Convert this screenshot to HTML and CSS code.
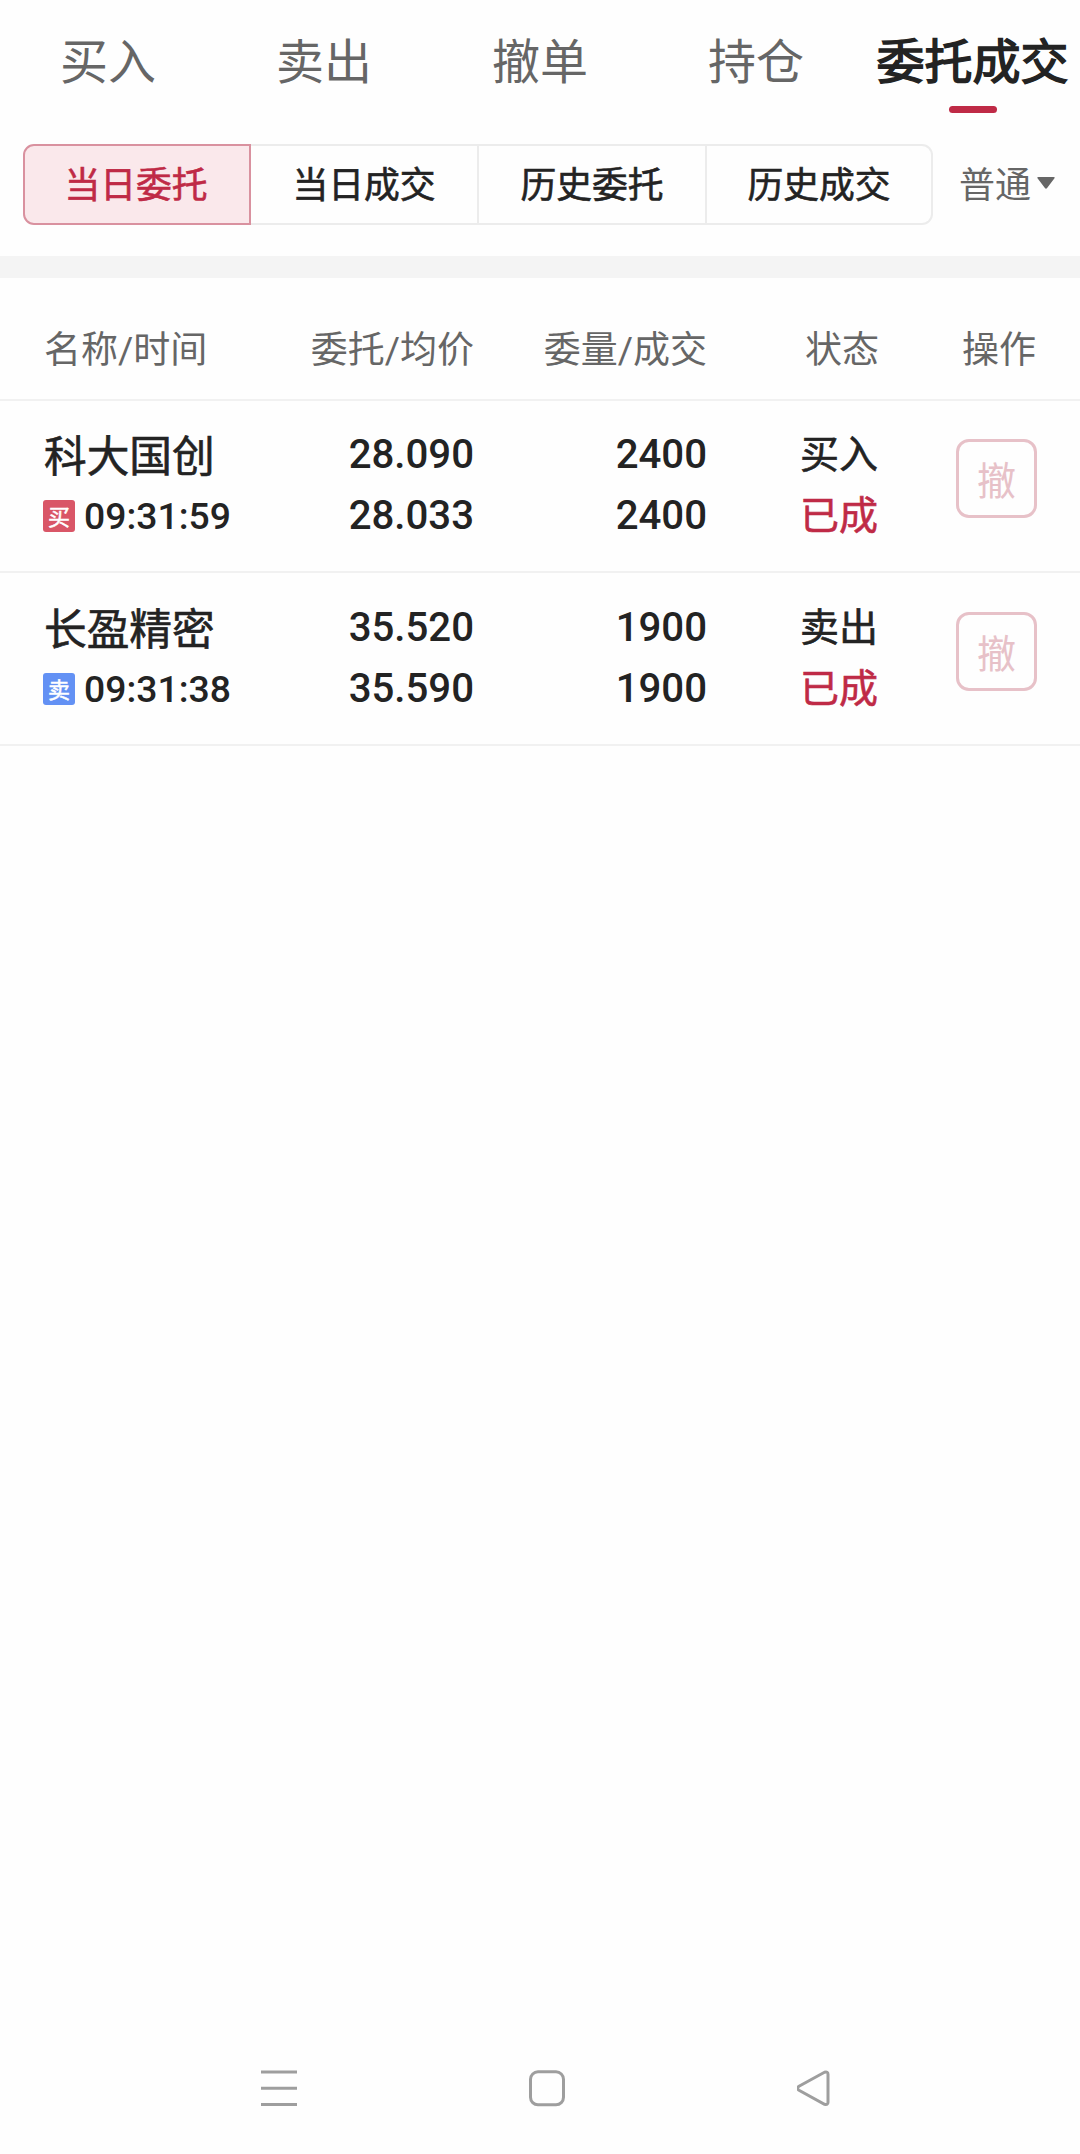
FILE: index.html
```html
<!DOCTYPE html>
<html lang="zh-CN">
<head>
<meta charset="utf-8">
<title>委托成交</title>
<link rel="stylesheet" href="styles.css">
</head>
<body>
<nav class="tabs">
  <a class="tab">买入</a>
  <a class="tab">卖出</a>
  <a class="tab">撤单</a>
  <a class="tab">持仓</a>
  <a class="tab active">委托成交</a>
</nav>
<section class="filters">
  <div class="segments">
    <span class="segment selected">当日委托</span>
    <span class="segment">当日成交</span>
    <span class="segment">历史委托</span>
    <span class="segment">历史成交</span>
  </div>
  <div class="type">普通<svg class="caret" width="18" height="12" viewBox="0 0 18 12"><path d="M1.500 0h15q2 0 .8 1.500l-7.200 9.500q-1.100 1.300-2.200 0L.7 1.500Q-.5 0 1.500 0z"/></svg></div>
</section>
<main class="orders">
  <div class="grid head">
    <span class="first">名称<i>/</i>时间</span><span>委托<i>/</i>均价</span><span>委量<i>/</i>成交</span><span>状态</span><span class="last">操作</span>
  </div>
  <div class="grid row">
    <div class="stock"><div class="name">科大国创</div><div class="time"><span class="badge buy">买</span>09:31:59</div></div>
    <div class="num"><div>28.090</div><div>28.033</div></div>
    <div class="num"><div>2400</div><div>2400</div></div>
    <div class="status"><div>买入</div><div class="done">已成</div></div>
    <button class="cancel">撤</button>
  </div>
  <div class="grid row">
    <div class="stock"><div class="name">长盈精密</div><div class="time"><span class="badge sell">卖</span>09:31:38</div></div>
    <div class="num"><div>35.520</div><div>35.590</div></div>
    <div class="num"><div>1900</div><div>1900</div></div>
    <div class="status"><div>卖出</div><div class="done">已成</div></div>
    <button class="cancel">撤</button>
  </div>
</main>
<footer class="sysbar">
  <svg width="36" height="37" viewBox="0 0 36 37"><path d="M0 2h36M0 18.300h36M0 34.500h36"/></svg>
  <svg width="36" height="37" viewBox="0 0 36 37"><rect x="1.500" y="1.800" width="33" height="33" rx="7.500"/></svg>
  <svg width="36" height="37" viewBox="0 0 36 37"><path d="M27.500 2.300 2 16.300q-3 2 0 4l25.500 14q3.500 1 3.500-2v-28q0-3-3.500-2z"/></svg>
</footer>
</body>
</html>
```
FILE: styles.css
```css
* { box-sizing: border-box; }
body {
  margin: 0;
  min-height: 2154px;
  display: flex;
  flex-direction: column;
  background: #fefefe;
  color: #232323;
  font-family: "Noto Sans CJK SC", sans-serif;
}
.tabs { display: grid; grid-template-columns: repeat(5, 216px); height: 144px; }
.tab {
  display: flex;
  flex-direction: column;
  align-items: center;
  padding-top: 24px;
  font-size: 48px;
  line-height: 69px;
  color: #666;
  white-space: nowrap;
}
.tab.active {
  padding-left: 1px;
  color: #232323;
  -webkit-text-stroke: 1.5px #232323;
}
.tab.active::after {
  content: "";
  width: 48px;
  height: 7px;
  margin-top: 13px;
  border-radius: 4px;
  background: #bf2a46;
}
.filters {
  display: flex;
  align-items: flex-start;
  height: 134px;
  padding-left: 23px;
  border-bottom: 22px solid #f4f4f4;
}
.segments {
  display: grid;
  grid-template-columns: 228px 228px 228px 226px;
  height: 81px;
}
.segment {
  border: 2px solid #ececec;
  border-left-width: 0;
  font-size: 35.8px;
  line-height: 73px;
  text-align: center;
  -webkit-text-stroke: 0.6px;
}
.segment:last-child { border-radius: 0 11px 11px 0; }
.segment.selected {
  padding-right: 2px;
  border: 2px solid #d9919f;
  border-radius: 11px 0 0 11px;
  background: #fae8eb;
  color: #bf2a46;
}
.type {
  display: flex;
  align-items: center;
  gap: 6px;
  margin-left: 26px;
  font-size: 36px;
  line-height: 77px;
  color: #666;
}
.caret { margin-top: 1px; fill: #666; }
.grid {
  display: grid;
  grid-template-columns: 240px 191px 233px 171px 159px;
  padding-left: 43px;
  text-align: right;
  border-bottom: 2px solid #f1f1f1;
}
.head { height: 123px; font-size: 37px; line-height: 138px; color: #666; }
.head i { font: 37px/1 Roboto, sans-serif; }
.head span:nth-child(4) { margin-right: -1px; }
.first { padding-left: 1px; text-align: left; }
.last { padding-right: 1px; }
.row { height: 172px; }
.row + .row { height: 173px; padding-top: 1px; }
.stock { text-align: left; padding-top: 23px; }
.name {
  padding-left: 1px;
  font-size: 42.7px;
  line-height: 59px;
  -webkit-text-stroke: 0.6px;
}
.time {
  display: flex;
  align-items: center;
  gap: 9px;
  font: 500 37.3px/44px Roboto, sans-serif;
  margin-top: 11px;
}
.badge {
  width: 32px;
  height: 32px;
  border-radius: 3px;
  color: #fff;
  font: 400 22px/31px "Noto Sans CJK SC", sans-serif;
  text-align: center;
  -webkit-text-stroke: 0.5px;
}
.buy { background: #d95667; }
.sell { background: #6391f4; }
.num { padding-top: 23px; font: 500 40.2px/61px Roboto, sans-serif; }
.status {
  padding-top: 20px;
  font-size: 39px;
  line-height: 61px;
  -webkit-text-stroke: 0.6px;
}
.done { color: #bf2a46; }
.cancel {
  width: 81px;
  height: 79px;
  margin-top: 38px;
  padding: 0;
  justify-self: end;
  border: 3px solid #e7c1c8;
  border-radius: 13px;
  background: none;
  color: #e7c1c8;
  font: 400 39px/71px "Noto Sans CJK SC", sans-serif;
}
.sysbar {
  display: flex;
  gap: 232px;
  margin-top: auto;
  padding: 0 0 47px 261px;
}
.sysbar svg { fill: none; stroke: #9e9e9e; stroke-width: 3; }
```
